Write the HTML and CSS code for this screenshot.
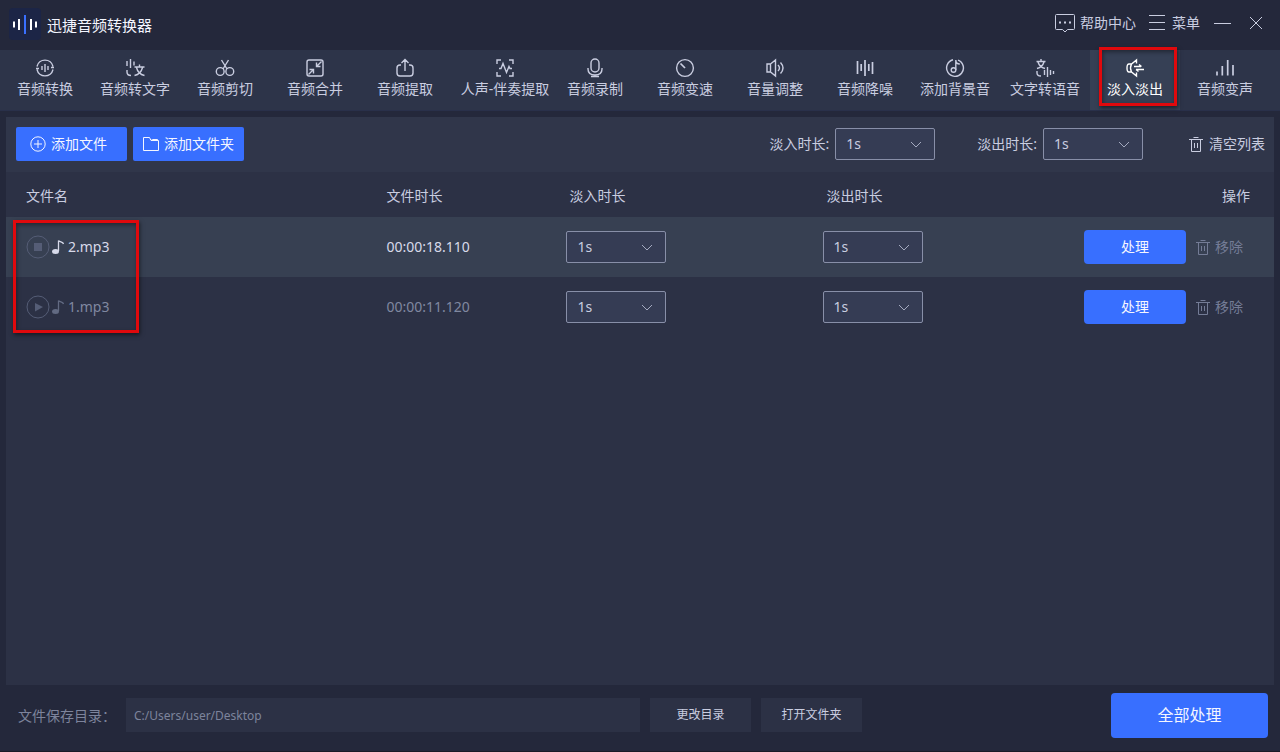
FILE: index.html
```html
<!DOCTYPE html>
<html lang="zh-CN">
<head>
<meta charset="utf-8">
<title>迅捷音频转换器</title>
<link rel="stylesheet" href="styles.css">
</head>
<body>
<svg class="defs" aria-hidden="true">
  <symbol id="chevron" viewBox="0 0 12 7"><path d="M1 1l5 5 5-5"/></symbol>
  <symbol id="trash" viewBox="0 0 16 18"><path d="M1 4.500h14M5.500 2.500h5M3.500 4.500v12h9v-12M6.500 8v5M9.500 8v5"/></symbol>
  <symbol id="note" viewBox="0 0 14 16"><path d="M7.500 12V1.500c1 2 4.500 1 5 3.500" fill="none" stroke="currentColor" stroke-width="1.300"/><ellipse cx="4.500" cy="12.500" rx="3.500" ry="2.500" fill="currentColor" stroke="none"/></symbol>
</svg>
<div class="app">
  <header class="titlebar">
    <svg class="logo" viewBox="0 0 32 32"><rect width="32" height="32" rx="4" fill="#1c2546" stroke="none"/><g stroke="#fff" stroke-width="2" fill="none"><path d="M5 13.500v6M10 11v11M22 11v11M27 13.500v6"/></g><path d="M16 7v19" stroke="#3a70ff" stroke-width="2"/></svg>
    <h1 class="title">迅捷音频转换器</h1>
    <div class="window-actions">
      <button class="plain help"><svg class="ico-help" viewBox="0 0 20 19"><path d="M1.500.5h17q1 0 1 1v13q0 1-1 1h-6l-2.500 2.500-2.500-2.500h-6q-1 0-1-1v-13q0-1 1-1z"/><path d="M4 8.500h2M9 8.500h2M14 8.500h2" stroke-width="1.800"/></svg>帮助中心</button>
      <button class="plain menu"><svg class="ico-menu" viewBox="0 0 16 16"><path d="M0 .5h16M0 7.500h16M0 14.500h16"/></svg>菜单</button>
      <button class="plain minimize" aria-label="最小化"><svg viewBox="0 0 18 14"><path d="M0 7.500h17"/></svg></button>
      <button class="plain close" aria-label="关闭"><svg viewBox="0 0 14 14"><path d="M1 1l12 12M13 1L1 13"/></svg></button>
    </div>
  </header>

  <nav class="tabs">
    <button class="tab"><svg viewBox="0 0 20 20"><path d="M2 8.500a8.200 8.200 0 0 1 16 0M18 11.500a8.200 8.200 0 0 1-16 0M1 10.500h3M16 9.500h3M7 8v4M10 6v8M13 8v4"/></svg>音频转换</button>
    <button class="tab"><svg viewBox="0 0 20 20"><path d="M2 3v5M5.500 1v9M9 3.500v4M2 12v2q0 3.500 4 3.500M9.500 9h10M14.500 6.500V9M11.500 9.500q1.500 6.500 8 8M17.500 9.500q-1.500 6.500-8 8"/></svg>音频转文字</button>
    <button class="tab"><svg viewBox="0 0 20 20"><circle cx="5.200" cy="13.500" r="3.900"/><circle cx="14.800" cy="13.500" r="3.900"/><path d="M6.500 2l5.500 9M13.500 2L8 11"/></svg>音频剪切</button>
    <button class="tab"><svg viewBox="0 0 20 20"><rect x="2" y="2" width="16" height="16" rx="2"/><path d="M16.500 3.500l-4.500 4.500M11.500 4.500v4h4M3.500 16.500L8 12M8.500 15.500v-4h-4"/></svg>音频合并</button>
    <button class="tab"><svg viewBox="0 0 20 20"><path d="M6 7H5Q2 7 2 10v5q0 3 3 3h10q3 0 3-3v-5q0-3-3-3h-1M10 13V1.500M6.500 5L10 1.500 13.500 5"/></svg>音频提取</button>
    <button class="tab tab-wide"><svg viewBox="0 0 20 20"><path d="M2 6V2h4M14 2h4v4M18 14v4h-4M6 18H2v-4M4 10.500h2l2-5 3.500 9 2.500-6 1 2h2"/></svg>人声-伴奏提取</button>
    <button class="tab"><svg viewBox="0 0 20 20"><rect x="6" y="1" width="8" height="13" rx="4"/><path d="M3 10v1q0 6 7 6t7-6v-1M10 17v2M6 18.500h8"/></svg>音频录制</button>
    <button class="tab"><svg viewBox="0 0 20 20"><circle cx="10" cy="10" r="8.400"/><path d="M5.500 5.500L10 10" stroke-width="1.700"/></svg>音频变速</button>
    <button class="tab"><svg viewBox="0 0 20 20"><path d="M5.500 6L10.500 2v16l-5-4H2V6zM5.500 6v8M13 7q3 3 0 6M15.500 4.500q5 5.500 0 11"/></svg>音量调整</button>
    <button class="tab"><svg viewBox="0 0 20 20"><path d="M2.500 3v13M6.200 6v7M10 2v16M13.800 6v7M17.500 4v12" stroke-width="1.700"/></svg>音频降噪</button>
    <button class="tab"><svg viewBox="0 0 20 20"><path d="M8 1.800a8.400 8.400 0 1 0 5 .3M10.800 12V2q0 4 4 4"/><circle cx="8.500" cy="12" r="2.300"/></svg>添加背景音</button>
    <button class="tab"><svg viewBox="0 0 20 20"><path d="M1.500 3.500h9M6 1v2.500M3 4q1.500 5 7 6.500M9 4q-1.500 5-7 6.500M2 13v2q0 3 4 3M9.500 12v5M12.500 9v10M15.500 12v5M18.500 13v3"/></svg>文字转语音</button>
    <button class="tab active"><svg viewBox="0 0 20 20"><path d="M11.500 5.500V2L6.500 6H4q-2 0-2 4t2 4h2.500l5 4v-3.500M6.500 6q-2 4 0 8M9 8.500h7M14 6.500l2.500 2M19 11.500h-8M13.500 13.500l-2.500-2"/></svg>淡入淡出<span class="mark mark-tab"></span></button>
    <button class="tab"><svg viewBox="0 0 20 20"><path d="M2 13.500v4M7.300 8v9.500M12.700 2v15.500M18 7v10.500" stroke-width="1.700"/></svg>音频变声</button>
  </nav>

  <main class="panel">
    <div class="toolbar">
      <button class="primary add add-file"><svg class="ico-add" viewBox="0 0 16 16"><circle cx="8" cy="8" r="7.200"/><path d="M8 4v8M4 8h8"/></svg>添加文件</button>
      <button class="primary add"><svg class="ico-add" viewBox="0 0 16 16"><path d="M.5 14.500v-13h6l1.500 3h7.500v10zM8 4.500l1.500-1h5v1"/></svg>添加文件夹</button>
      <div class="settings">
        <label class="setting">淡入时长:<span class="pick"><select><option>1s</option></select><svg><use href="#chevron"/></svg></span></label>
        <label class="setting">淡出时长:<span class="pick"><select><option>1s</option></select><svg><use href="#chevron"/></svg></span></label>
        <button class="plain clear"><svg class="ico-trash"><use href="#trash"/></svg>清空列表</button>
      </div>
    </div>
    <div class="list">
      <table class="files">
        <thead><tr><th class="c-name">文件名</th><th class="c-time">文件时长</th><th class="c-in">淡入时长</th><th class="c-out">淡出时长</th><th class="c-ops">操作</th></tr></thead>
        <tbody>
          <tr class="selected">
            <td><div class="file"><button class="plain play" aria-label="停止"><svg viewBox="0 0 24 24"><circle cx="12" cy="12" r="11"/><path d="M8 8h8v8H8z" class="solid"/></svg></button><svg class="ico-note"><use href="#note"/></svg>2.mp3</div></td>
            <td>00:00:18.110</td>
            <td><span class="pick"><select aria-label="淡入时长"><option>1s</option></select><svg><use href="#chevron"/></svg></span></td>
            <td><span class="pick"><select aria-label="淡出时长"><option>1s</option></select><svg><use href="#chevron"/></svg></span></td>
            <td><div class="ops"><button class="primary run">处理</button><button class="plain remove"><svg class="ico-trash"><use href="#trash"/></svg>移除</button></div></td>
          </tr>
          <tr>
            <td><div class="file"><button class="plain play" aria-label="播放"><svg viewBox="0 0 24 24"><circle cx="12" cy="12" r="11"/><path d="M9 8l8 4-8 4.500z" class="solid"/></svg></button><svg class="ico-note dim"><use href="#note"/></svg>1.mp3</div></td>
            <td>00:00:11.120</td>
            <td><span class="pick"><select aria-label="淡入时长"><option>1s</option></select><svg><use href="#chevron"/></svg></span></td>
            <td><span class="pick"><select aria-label="淡出时长"><option>1s</option></select><svg><use href="#chevron"/></svg></span></td>
            <td><div class="ops"><button class="primary run">处理</button><button class="plain remove"><svg class="ico-trash"><use href="#trash"/></svg>移除</button></div></td>
          </tr>
        </tbody>
      </table>
      <span class="mark mark-files"></span>
    </div>
  </main>

  <footer class="footer">
    <label class="path-label" for="path">文件保存目录：</label>
    <input class="path" id="path" type="text" value="C:/Users/user/Desktop">
    <button class="secondary">更改目录</button>
    <button class="secondary">打开文件夹</button>
    <button class="primary run-all">全部处理</button>
  </footer>
</div>
</body>
</html>
```
FILE: styles.css
```css
* { box-sizing: border-box; }
body {
  margin: 0;
  background: #24283b;
  color: #c9cde0;
  font: 14px/20px "Noto Sans", "Noto Sans CJK SC", sans-serif;
}
button, input, select { font: inherit; color: inherit; margin: 0; }
svg { display: block; flex: none; fill: none; stroke: currentColor; }
.defs { position: absolute; width: 0; height: 0; }
.app { display: flex; flex-direction: column; min-height: 100vh; border-bottom: 1px solid #1a1c28; }
.plain { display: flex; align-items: center; padding: 0; border: 0; background: none; }
.primary {
  display: flex; align-items: center; justify-content: center;
  padding: 0; border: 0; border-radius: 2px;
  background: #386fff; color: #f4f6ff;
}
.mark { position: absolute; border: 3px solid #e0090d; box-shadow: 1px 2px 4px rgba(0, 0, 0, .5), inset 1px 2px 4px rgba(0, 0, 0, .4); pointer-events: none; }

.titlebar { display: flex; align-items: center; height: 50px; padding: 0 17px 2px 9px; }
.logo { width: 32px; height: 32px; }
.title { margin: 2px 0 0 6px; color: #f4f6ff; font-size: 15px; font-weight: 400; }
.window-actions { display: flex; align-items: center; margin: 0 0 2px auto; }
.help { gap: 5px; }
.ico-help { width: 20px; height: 19px; }
.menu { gap: 7px; margin-left: 13px; }
.ico-menu { width: 16px; height: 16px; }
.minimize { margin-left: 14px; }
.minimize svg { width: 18px; height: 14px; }
.close { margin-left: 17px; }
.close svg { width: 14px; height: 14px; }

.tabs { display: grid; grid-template-columns: repeat(5, 9fr) 10fr repeat(8, 9fr); height: 61px; padding-right: 10px; background: #2d3449; border-bottom: 1px solid #29304a; }
.tab {
  position: relative;
  display: flex; flex-direction: column; align-items: center;
  min-width: 0; padding: 8px 0 0; border: 0; background: none; white-space: nowrap;
}
.tab svg { width: 20px; height: 20px; margin-bottom: 1px; stroke-width: 1.4; }
.tab-wide { padding-left: 10px; }
.active { background: #364055; color: #fff; }
.mark-tab { inset: -3px 3px 4px 9px; }

.panel { display: flex; flex: 1; flex-direction: column; margin: 6px 6px 0; background: #2c3145; }
.toolbar { display: flex; align-items: center; gap: 6px; height: 55px; padding: 0 9px 2px 10px; background: #30364a; }
.add { gap: 5px; width: 111px; height: 34px; }
.add-file { justify-content: flex-start; padding-left: 14px; }
.ico-add { width: 16px; height: 16px; }
.settings { display: flex; align-items: center; margin-left: auto; }
.setting { display: flex; align-items: center; gap: 6px; margin-right: 42px; }
.pick { position: relative; display: block; width: 100px; height: 32px; }
.pick select {
  appearance: none; width: 100%; height: 100%; padding: 0 10px;
  border: 1px solid #888fa8; border-radius: 2px; background: #353c54; color: #c9cde0;
}
.pick svg { position: absolute; right: 13px; top: 13px; width: 12px; height: 7px; color: #a4aac0; pointer-events: none; }
.clear { gap: 5px; margin-left: 3px; }
.ico-trash { width: 16px; height: 18px; }

.list { position: relative; }
.files { width: 100%; table-layout: fixed; border-collapse: collapse; }
.files th, .files td { padding: 0; text-align: left; font-weight: 400; }
.files th { height: 45px; padding-top: 2px; }
.files td { height: 60px; color: #8088a0; }
.files .c-name { width: 30%; padding-left: 20px; }
.c-time { width: 14.2%; }
.files .c-in { width: 20.2%; padding-left: 3px; }
.files .c-out { padding-left: 4px; }
.files .c-ops { width: 16%; padding-right: 24px; text-align: right; }
.files .selected { background: #374052; }
.files .selected td { color: #d7daea; }
.file { display: flex; align-items: center; padding-left: 20px; }
.play { color: #555d76; }
.play svg { width: 24px; height: 24px; }
.solid { fill: currentColor; stroke: none; }
.ico-note { width: 14px; height: 16px; margin: 0 3px 0 1px; }
.dim { color: #626a82; }
.ops { display: flex; align-items: center; justify-content: flex-end; gap: 9px; padding-right: 31px; }
.run { width: 102px; height: 34px; border-radius: 4px; }
.remove { gap: 4px; color: #747c96; }
.mark-files { left: 7px; top: 48px; width: 126px; height: 113px; }

.footer { display: flex; align-items: center; height: 66px; padding: 0 12px 6px 18px; }
.path-label { width: 108px; padding-top: 2px; color: #7d849c; }
.path { flex: 0 1 514px; min-width: 0; height: 34px; padding: 0 8px; border: 0; background: #2c3145; color: #7d849c; font-size: 12px; }
.secondary { width: 101px; height: 34px; margin-left: 10px; padding: 0; border: 0; background: #2c3145; font-size: 12px; }
.run-all { width: 157px; height: 45px; margin-left: auto; border-radius: 4px; font-size: 16px; }
```
